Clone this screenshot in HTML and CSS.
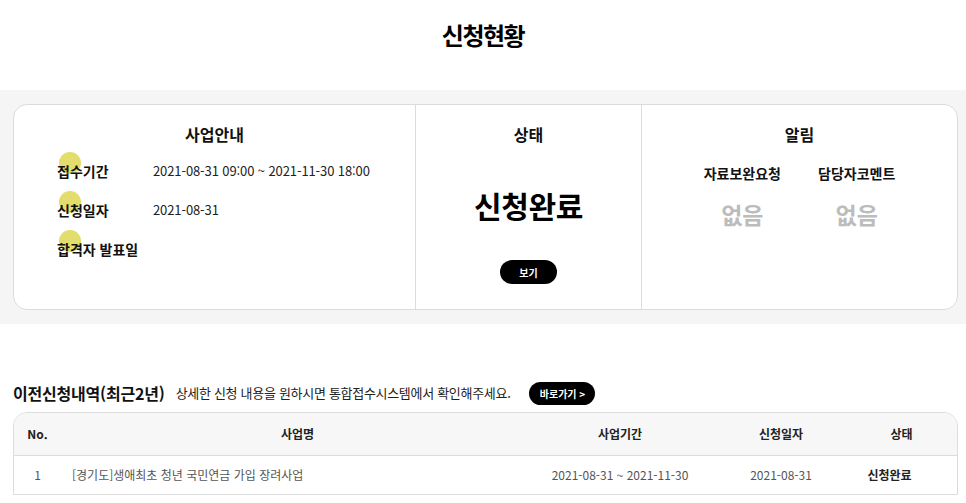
FILE: index.html
```html
<!DOCTYPE html>
<html lang="ko">
<head>
<meta charset="utf-8">
<title>신청현황</title>
<link rel="stylesheet" href="styles.css">
</head>
<body>
<header class="page-head">
  <h1 class="page-title">신청현황</h1>
</header>

<section class="status-band">
  <div class="status-card">
    <div class="col col-info">
      <h2 class="col-title">사업안내</h2>
      <dl class="info-list">
        <dt class="info-label">접수기간</dt>
        <dd class="info-value">2021-08-31 09:00 ~ 2021-11-30 18:00</dd>
        <dt class="info-label">신청일자</dt>
        <dd class="info-value">2021-08-31</dd>
        <dt class="info-label">합격자 발표일</dt>
        <dd class="info-value"></dd>
      </dl>
    </div>
    <div class="col col-state">
      <h2 class="col-title">상태</h2>
      <p class="state-text">신청완료</p>
      <button class="pill-btn view-btn" type="button">보기</button>
    </div>
    <div class="col col-notice">
      <h2 class="col-title">알림</h2>
      <div class="notice-grid">
        <div class="notice-item">
          <span class="notice-label">자료보완요청</span>
          <span class="notice-value">없음</span>
        </div>
        <div class="notice-item">
          <span class="notice-label">담당자코멘트</span>
          <span class="notice-value">없음</span>
        </div>
      </div>
    </div>
  </div>
</section>

<section class="history">
  <div class="history-head">
    <h2 class="history-title">이전신청내역(최근2년)</h2>
    <p class="history-desc">상세한 신청 내용을 원하시면 통합접수시스템에서 확인해주세요.</p>
    <button class="pill-btn go-btn" type="button">바로가기 &gt;</button>
  </div>
  <div class="table-wrap">
    <table class="history-table">
      <colgroup>
        <col class="c-no">
        <col class="c-name">
        <col class="c-period">
        <col class="c-date">
        <col class="c-state">
      </colgroup>
      <thead>
        <tr>
          <th>No.</th>
          <th>사업명</th>
          <th>사업기간</th>
          <th>신청일자</th>
          <th class="th-state">상태</th>
        </tr>
      </thead>
      <tbody>
        <tr>
          <td>1</td>
          <td class="td-name">[경기도]생애최초 청년 국민연금 가입 장려사업</td>
          <td>2021-08-31 ~ 2021-11-30</td>
          <td>2021-08-31</td>
          <td class="td-state">신청완료</td>
        </tr>
      </tbody>
    </table>
  </div>
</section>
</body>
</html>
```

FILE: styles.css
```css
* { box-sizing: border-box; }

html, body {
  margin: 0;
  padding: 0;
  background: #fff;
  color: #111;
  font-family: "Noto Sans CJK KR", "Noto Sans", sans-serif;
}

h1, h2, p, dl, dd, dt { margin: 0; padding: 0; }

.page-head {
  height: 90px;
  padding-top: 20px;
  text-align: center;
}

.page-title {
  font-size: 24px;
  line-height: 30px;
  font-weight: 700;
  letter-spacing: -1.5px;
  color: #000;
}

.status-band {
  background: #f5f5f5;
  padding: 14px 8px 14px 13px;
}

.status-card {
  display: grid;
  grid-template-columns: 401px 226px 1fr;
  height: 206px;
  background: #fff;
  border: 1px solid #dcdcdc;
  border-radius: 14px;
}

.col {
  padding-top: 19px;
  text-align: center;
}

.col + .col { border-left: 1px solid #dcdcdc; }

.col-title {
  font-size: 16px;
  line-height: 20px;
  font-weight: 700;
  color: #111;
}

.info-list {
  display: grid;
  grid-template-columns: 96px 1fr;
  grid-auto-rows: 39px;
  align-items: center;
  margin-top: 7px;
  padding-left: 43px;
  text-align: left;
}

.info-label {
  position: relative;
  isolation: isolate;
  font-size: 14px;
  line-height: 20px;
  font-weight: 700;
  color: #111;
  white-space: nowrap;
}

.info-label::before {
  content: "";
  position: absolute;
  left: 2px;
  top: -9px;
  width: 22px;
  height: 22px;
  border-radius: 50%;
  background: #e2dd6c;
  z-index: -1;
}

.info-value {
  font-size: 13px;
  line-height: 20px;
  color: #222;
  letter-spacing: -0.1px;
}

.col-state {
  display: flex;
  flex-direction: column;
  align-items: center;
}

.state-text {
  margin-top: 41px;
  font-size: 30px;
  line-height: 40px;
  font-weight: 700;
  color: #000;
  letter-spacing: -0.3px;
}

.pill-btn {
  border: 0;
  background: #000;
  color: #fff;
  font-family: inherit;
  font-weight: 700;
  font-size: 10px;
  border-radius: 12px;
  padding: 0;
  cursor: pointer;
}

.view-btn {
  margin-top: 35px;
  width: 57px;
  height: 24px;
}

.notice-grid {
  display: flex;
  justify-content: center;
  gap: 37px;
  margin-top: 19px;
}

.notice-item {
  display: flex;
  flex-direction: column;
  align-items: center;
}

.notice-label {
  font-size: 14px;
  line-height: 20px;
  font-weight: 700;
  color: #111;
}

.notice-value {
  margin-top: 16px;
  font-size: 23px;
  line-height: 30px;
  font-weight: 700;
  color: #bcbcbc;
}

.history {
  padding: 57px 8px 0 13px;
}

.history-head {
  display: flex;
  align-items: center;
  height: 24px;
}

.history-title {
  font-size: 16px;
  line-height: 24px;
  font-weight: 700;
  color: #111;
  letter-spacing: -0.2px;
}

.history-desc {
  margin-left: 11px;
  font-size: 13px;
  line-height: 20px;
  color: #222;
  letter-spacing: -0.3px;
}

.go-btn {
  margin-left: 19px;
  width: 66px;
  height: 23px;
}

.table-wrap {
  margin-top: 7px;
  border: 1px solid #dcdcdc;
  border-radius: 14px 14px 0 0;
  overflow: hidden;
}

.history-table {
  width: 100%;
  border-collapse: collapse;
  table-layout: fixed;
}

.c-no { width: 47px; }
.c-name { width: 473px; }
.c-period { width: 172px; }
.c-date { width: 150px; }

.history-table th {
  height: 42px;
  background: #f7f7f7;
  font-size: 12px;
  font-weight: 700;
  color: #222;
  text-align: center;
  border-bottom: 1px solid #dcdcdc;
  padding: 0;
}

.history-table th.th-state { padding-right: 10px; }

.history-table td {
  height: 39px;
  font-size: 12px;
  color: #555;
  text-align: center;
  padding: 0;
}

.history-table td.td-name {
  text-align: left;
  padding-left: 11px;
}

.history-table td.td-state {
  color: #222;
  font-weight: 700;
  padding-right: 34px;
}
```
